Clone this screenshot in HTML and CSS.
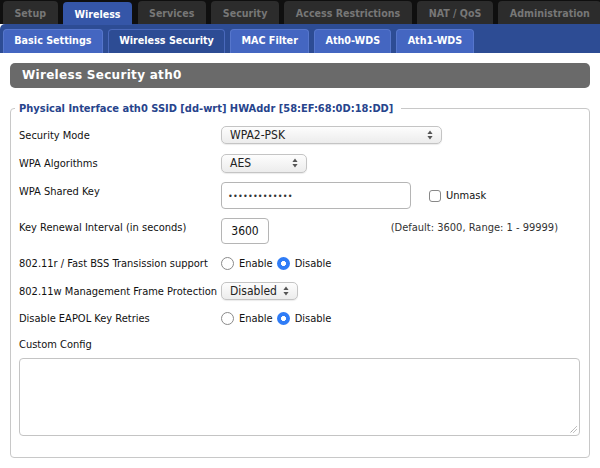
FILE: index.html
```html
<!DOCTYPE html>
<html>
<head>
<meta charset="utf-8">
<link rel="stylesheet" href="styles.css">
</head>
<body>
<div class="topnav">
  <div class="tab">Setup</div>
  <div class="tab active">Wireless</div>
  <div class="tab">Services</div>
  <div class="tab">Security</div>
  <div class="tab">Access Restrictions</div>
  <div class="tab">NAT / QoS</div>
  <div class="tab">Administration</div>
</div>
<div class="subnav">
  <div class="subtab">Basic Settings</div>
  <div class="subtab active">Wireless Security</div>
  <div class="subtab">MAC Filter</div>
  <div class="subtab">Ath0-WDS</div>
  <div class="subtab">Ath1-WDS</div>
</div>
<div class="content">
  <h2 class="title">Wireless Security ath0</h2>
  <fieldset class="group">
    <legend>Physical Interface ath0 SSID [dd-wrt] HWAddr [58:EF:68:0D:18:DD]</legend>
    <div class="row r1">
      <div class="label">Security Mode</div>
      <div class="select wide"><span class="val">WPA2-PSK</span><svg class="arrows" width="6" height="10" viewBox="0 0 6 10"><path d="M3 0.5L5.6 4H0.4z M3 9.5L5.6 6H0.4z" fill="#555"/></svg></div>
    </div>
    <div class="row r2">
      <div class="label">WPA Algorithms</div>
      <div class="select mid"><span class="val">AES</span><svg class="arrows" width="6" height="10" viewBox="0 0 6 10"><path d="M3 0.5L5.6 4H0.4z M3 9.5L5.6 6H0.4z" fill="#555"/></svg></div>
    </div>
    <div class="row r3">
      <div class="label top">WPA Shared Key</div>
      <div class="input key">&#8226;&#8226;&#8226;&#8226;&#8226;&#8226;&#8226;&#8226;&#8226;&#8226;&#8226;&#8226;&#8226;</div>
      <span class="check"></span><span class="checktext">Unmask</span>
    </div>
    <div class="row r4">
      <div class="label top">Key Renewal Interval (in seconds)</div>
      <div class="input num">3600</div>
      <span class="hint">(Default: 3600, Range: 1 - 99999)</span>
    </div>
    <div class="row r5">
      <div class="label">802.11r / Fast BSS Transission support</div>
      <span class="radio"></span><span class="rtext">Enable</span>
      <span class="radio on"></span><span class="rtext">Disable</span>
    </div>
    <div class="row r6">
      <div class="label">802.11w Management Frame Protection</div>
      <div class="select small"><span class="val">Disabled</span><svg class="arrows" width="6" height="10" viewBox="0 0 6 10"><path d="M3 0.5L5.6 4H0.4z M3 9.5L5.6 6H0.4z" fill="#555"/></svg></div>
    </div>
    <div class="row r7">
      <div class="label">Disable EAPOL Key Retries</div>
      <span class="radio"></span><span class="rtext">Enable</span>
      <span class="radio on"></span><span class="rtext">Disable</span>
    </div>
    <div class="cclabel">Custom Config</div>
    <div class="textarea"><svg class="grip" width="8" height="8" viewBox="0 0 8 8"><path d="M7.5 1.5L1.5 7.5M7.5 4.5L4.5 7.5" stroke="#666" stroke-width="0.8" stroke-dasharray="1 0.6"/></svg></div>
  </fieldset>
</div>
</body>
</html>
```
FILE: styles.css
```css
* { box-sizing: border-box; }
html, body { margin: 0; padding: 0; background: #fff; }
body {
  width: 600px;
  height: 468px;
  overflow: hidden;
  font-family: "DejaVu Sans Condensed", "DejaVu Sans", sans-serif;
  font-size: 11px;
  color: #111;
}
.topnav {
  background: #0f0f0f;
  height: 24px;
  padding: 1px 0 0 3px;
  display: flex;
  gap: 5.5px;
}
.tab {
  height: 23px;
  padding: 0 11.5px;
  background: #2c2c2c;
  border-radius: 4px 4px 0 0;
  color: #777;
  font-family: "DejaVu Sans Condensed", "DejaVu Sans", sans-serif;
  font-weight: bold;
  font-size: 10.6px;
  line-height: 24px;
  white-space: nowrap;
}
.tab.active {
  background: #3556a8;
  color: #fff;
  margin-top: 1px;
  height: 23px;
}
.subnav {
  background: #2d4c94;
  height: 29px;
  border-radius: 5px 0 0 0;
  padding: 5px 0 0 3px;
  display: flex;
  gap: 5px;
}
.subtab {
  height: 24px;
  padding: 0 10.3px;
  background: #4466c1;
  border: 1px solid #5676cc;
  border-bottom: none;
  border-radius: 4px 4px 0 0;
  color: #fff;
  font-weight: bold;
  font-size: 10.7px;
  line-height: 22px;
  white-space: nowrap;
}
.subtab.active {
  background: #2d4c94;
  border-color: #4a69bb;
}
.content {
  padding: 10px 10px 0 10px;
}
.title {
  margin: 0;
  height: 25px;
  background: #6a6a6a;
  border-radius: 5px;
  color: #fff;
  font-family: "DejaVu Sans", sans-serif;
  font-size: 12px;
  font-weight: bold;
  letter-spacing: 0.3px;
  line-height: 25px;
  padding-left: 12px;
}
.group {
  margin: 14px 0 0 0;
  border: 1px solid #c8c8c8;
  border-radius: 4px;
  padding: 11px 9px 21px 8px;
  min-width: 0;
}
.group legend {
  margin-left: -4px;
  padding: 0 8px 0 4px;
  color: #27448c;
  font-weight: bold;
  font-size: 11px;
}
.row {
  display: flex;
  align-items: center;
}
.label {
  width: 202px;
  flex: none;
  white-space: nowrap;
}
.label.top { align-self: flex-start; padding-top: 3px; }
.r1 { height: 18px; margin-bottom: 10px; }
.r2 { height: 19px; margin-bottom: 9px; }
.r3 { height: 27px; margin-bottom: 9px; }
.r4 { height: 26px; margin-bottom: 9px; padding-right: 22px; }
.r5 { height: 20px; margin-bottom: 9px; }
.r6 { height: 18px; margin-bottom: 9px; }
.r7 { height: 18px; margin-bottom: 11px; }
.select {
  position: relative;
  height: 100%;
  border: 1px solid #c4c4c4;
  border-radius: 5px;
  background: linear-gradient(#fdfdfd, #ececec);
  box-shadow: 0 1px 1px rgba(0,0,0,0.08);
  font-family: "DejaVu Sans Condensed", sans-serif;
  font-size: 12px;
  line-height: 16px;
  padding-left: 8px;
  color: #222;
}
.select.wide { width: 221px; }
.select.mid { width: 86px; }
.select.small { width: 77px; }
.select .arrows { position: absolute; right: 8px; top: 3px; }
.input {
  height: 100%;
  border: 1px solid #b5b5b5;
  border-radius: 4px;
  background: #fff;
  font-size: 12px;
  display: flex;
  align-items: center;
}
.input.key { width: 190px; padding-left: 6px; font-size: 9px; letter-spacing: 0.2px; color: #333; }
.input.num { width: 48px; justify-content: center; }
.check {
  width: 12px; height: 12px;
  border: 1px solid #888;
  border-radius: 3px;
  margin-left: 18px;
  background: #fff;
}
.checktext { margin-left: 5px; font-size: 11px; }
.hint { margin-left: auto; color: #333; align-self: flex-start; padding-top: 3px; }
.radio {
  width: 13px; height: 13px;
  border: 1px solid #8a8a8a;
  border-radius: 50%;
  background: #fff;
  flex: none;
}
.radio.on {
  border: none;
  background: radial-gradient(circle, #fff 0 2.2px, #2f7cf6 2.8px);
  margin-left: 4px;
}
.rtext { margin-left: 5px; }
.cclabel { height: 14px; margin-bottom: 6px; line-height: 14px; }
.textarea {
  position: relative;
  height: 78px;
  border: 1px solid #c4c4c4;
  border-radius: 4px;
  background: #fff;
}
.grip { position: absolute; right: 2px; bottom: 2px; }
```
